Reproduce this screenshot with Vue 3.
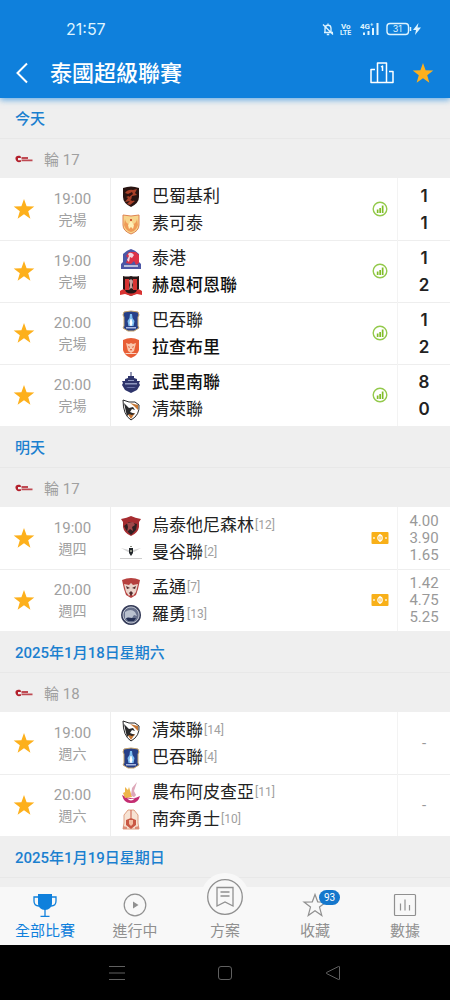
<template>
  <div class="app">
    <header class="header">
      <div class="status-bar">
        <span class="clock">21:57</span>
        <div class="status-icons">
          <svg width="12" height="14" viewBox="0 0 12 14" fill="none" stroke="currentColor" stroke-width="1.3">
            <path d="M2 10.500h9M3 10V6.500a3 3 0 0 1 6-.5v4M6 3V1.500M4.800 12.500h2.400M1 2.500l10 10" />
          </svg>
          <svg width="12" height="14" viewBox="0 0 12 14" fill="currentColor" class="tiny-text">
            <text x="1" y="6.500" font-size="8">Vo</text>
            <text x="0" y="13" font-size="7">LTE</text>
          </svg>
          <svg width="22" height="14" viewBox="0 0 22 14" fill="currentColor" class="tiny-text">
            <text x="2" y="6.500" font-size="8">4G⁺</text>
            <path d="M5 10.500h2V13H5zM9.500 9h2v4h-2zM14 6h2v7h-2zM18.500 1h2v12h-2z" />
          </svg>
          <svg width="36" height="14" viewBox="0 0 36 14" fill="none" stroke="currentColor" class="battery">
            <rect x="1" y="1.500" width="21.500" height="11" rx="3" stroke-width="1.400" />
            <path d="M24.500 5v4" stroke-width="1.500" />
            <text x="6.800" y="10.400" font-size="9" fill="currentColor" stroke="none">31</text>
            <path d="M32.500 1l-5.500 7h3l-1 5 6-7.500h-3.500z" fill="currentColor" stroke="none" />
          </svg>
        </div>
      </div>
      <div class="title-bar">
        <button class="icon-button back" type="button" aria-label="返回">
          <svg width="14" height="22" viewBox="0 0 14 22" fill="none" stroke="currentColor" stroke-width="2">
            <path d="M12 1.500L2.500 11l9.500 9.500" />
          </svg>
        </button>
        <h1 class="title">泰國超級聯賽</h1>
        <button class="icon-button" type="button" aria-label="排名">
          <svg width="24" height="22" viewBox="0 0 24 22" fill="none" stroke="currentColor" stroke-width="1.500">
            <path d="M7.500 20.500V1h9v19.500M5 7.500H1v13h22V9.500h-4M11 5l1.500-1V9" stroke-linejoin="round" />
          </svg>
        </button>
        <button class="icon-button" type="button" aria-label="收藏聯賽">
          <svg class="star" width="22" height="22" viewBox="0 0 22 22"><path :d="starPath" /></svg>
        </button>
      </div>
    </header>

    <main class="schedule">
      <section v-for="day in days" :key="day.date" class="day">
        <h2 class="date">{{ day.date }}</h2>
        <div class="round">
          <svg class="league-logo" width="18" height="8" viewBox="0 0 18 8">
            <path d="M5.500 1C2 0 0 1.500.500 4s2.500 3.800 5.500 2.800V5.200H3V3h3z" fill="#b3202c" />
            <path d="M6.500 2h6.500v2H6.500zM6.500 4.600h11v1.700h-11z" fill="#b3202c" opacity=".8" />
          </svg>
          <span>{{ day.round }}</span>
        </div>
        <ul class="matches">
          <li v-for="(match, matchIndex) in day.matches" :key="matchIndex" class="match">
            <div class="match-info">
              <button class="icon-button favourite" type="button" aria-label="收藏比賽">
                <svg class="star" width="22" height="22" viewBox="0 0 22 22"><path :d="starPath" /></svg>
              </button>
              <div class="time">
                <span>{{ match.time }}</span>
                <span class="state">{{ match.state }}</span>
              </div>
            </div>
            <div class="teams">
              <div v-for="team in match.teams" :key="team.name" class="team" :class="{ 'team--winner': team.winner }">
                <svg class="crest" width="22" height="22" viewBox="0 0 22 22">
                  <path
                    v-for="(shape, shapeIndex) in crests[team.crest]"
                    :key="shapeIndex"
                    :d="shape[0]"
                    :fill="shape[1]"
                    :stroke="shape[2] || 'none'"
                  />
                </svg>
                <span>{{ team.name }}</span>
                <span v-if="team.rank" class="rank">[{{ team.rank }}]</span>
              </div>
            </div>
            <div class="badge">
              <svg v-if="match.scores" width="16" height="16" viewBox="0 0 16 16">
                <circle cx="8" cy="8" r="6.800" fill="none" stroke="#93c94b" stroke-width="1.400" />
                <path d="M4.800 8.500h1.700V12H4.800zM7.300 7h1.700v5H7.300zM9.800 4.500h1.700V12H9.800z" fill="#80bd28" />
              </svg>
              <svg v-else-if="match.odds" width="18" height="14" viewBox="0 0 18 14">
                <rect x=".5" y="1" width="17" height="12" rx="1" fill="#f8b019" />
                <path d="M9 3v8M3 6v2M15 6v2" stroke="#fff" stroke-width="1.200" />
                <ellipse cx="9" cy="7" rx="2.200" ry="2.800" fill="none" stroke="#fff" stroke-width="1.200" />
              </svg>
            </div>
            <div class="result">
              <template v-if="match.scores">
                <span v-for="(score, i) in match.scores" :key="i" class="score">{{ score }}</span>
              </template>
              <template v-else-if="match.odds">
                <span v-for="odd in match.odds" :key="odd" class="odd">{{ odd }}</span>
              </template>
              <span v-else class="odd">-</span>
            </div>
          </li>
        </ul>
      </section>
    </main>

    <nav class="tabs">
      <a class="tab tab--active" href="#all">
        <svg width="26" height="26" viewBox="0 0 26 26">
          <path d="M6 2h14v9c0 4-3 7-7 7s-7-3-7-7z" fill="currentColor" />
          <path d="M6 5H2v4c0 3 2 5 5 5M20 5h4v4c0 3-2 5-5 5M13 17v7M8.500 24.300h9" fill="none" stroke="currentColor" stroke-width="1.300" />
        </svg>
        <span>全部比賽</span>
      </a>
      <a class="tab" href="#live">
        <svg width="26" height="26" viewBox="0 0 26 26">
          <circle cx="13" cy="13" r="10.800" fill="none" stroke="currentColor" stroke-width="1.200" />
          <path d="M11 9.500l5.500 3.500-5.500 3.500z" fill="currentColor" />
        </svg>
        <span>進行中</span>
      </a>
      <a class="tab tab--raised" href="#plans">
        <svg width="48" height="48" viewBox="0 0 48 48">
          <circle cx="24" cy="24" r="24" fill="#f8f8f8" />
          <g fill="none" stroke="currentColor" stroke-width="1.300">
            <circle cx="24" cy="24" r="17.300" />
            <path d="M16 14.500h16v18.500l-8-4-8 4zM19.500 19h9M19.500 23h9" />
          </g>
        </svg>
        <span>方案</span>
      </a>
      <a class="tab" href="#favourites">
        <svg width="26" height="26" viewBox="0 0 26 26" fill="none" stroke="currentColor" stroke-width="1.200">
          <path d="M13 2.500l2.700 7.300 8.300.300-6.500 5 2.300 8.400-6.800-4.700-6.800 4.700 2.300-8.400L2 10.100l8.300-.300z" />
        </svg>
        <span>收藏</span>
        <span class="count">93</span>
      </a>
      <a class="tab" href="#stats">
        <svg width="26" height="26" viewBox="0 0 26 26" fill="none" stroke="currentColor" stroke-width="1.200">
          <rect x="2.500" y="2.500" width="21" height="21" rx="1" />
          <path d="M8.500 11.500v7M13 7.500v11M17.500 13v5.500" />
        </svg>
        <span>數據</span>
      </a>
    </nav>

    <div class="system-nav">
      <button class="icon-button" type="button" aria-label="選單">
        <svg width="16" height="16" viewBox="0 0 16 16"><path d="M0 1.500h16M0 8h16M0 14.500h16" /></svg>
      </button>
      <button class="icon-button" type="button" aria-label="主畫面">
        <svg width="16" height="16" viewBox="0 0 16 16"><rect x="1.500" y="1.500" width="13" height="13" rx="2.500" /></svg>
      </button>
      <button class="icon-button" type="button" aria-label="上一頁">
        <svg width="16" height="16" viewBox="0 0 16 16"><path d="M14.500 2v12q0 1-1 .500L1.500 8.500q-.8-.5 0-1l12-6q1-.5 1 .5z" /></svg>
      </button>
    </div>
  </div>
</template>

<script setup>
const starPath = 'M11 1l2.600 7.300 7.700.200-6.100 4.700 2.200 7.500L11 16.300l-6.400 4.400 2.200-7.500L.7 8.500l7.700-.200z'

const shield = 'M3 2q8-3 16 0v9q0 6-8 10-8-4-8-10z'

// each crest is a list of [path, fill, stroke]
const crests = {
  police: [
    [shield, '#291411'],
    ['M5 7q3-4 8-3l4-1-2 4 2 2-5 1-1 4 4 1-5 4-3-1 3-3-5 1 3-4-2-1 5-2z', '#a94028'],
    ['M8 8l4-2 1 2-4 3zM10 14l4-2-1 3z', '#30100e'],
  ],
  sukhothai: [
    ['M3 2q8 2 16 0v10q0 6-8 9-8-3-8-9z', '#f7d58c', '#df8350'],
    ['M5 6q1 6 6 5 5 1 6-5l1 6q-2 6-7 7-5-1-7-7z', '#ef9b57'],
    ['M8 12l3-4 3 4-1 4-2-2-2 2z', '#fff0b8'],
    ['M10 6h2v2h-2z', '#d45a36'],
  ],
  port: [
    ['M11 1q4 1 8 5v8l2 2v5H1v-5l2-2V6q4-4 8-5z', '#4c57a6'],
    ['M12 4h4l3 3v8l-3 2-2-4-3 3-5-1 2-5-2-2 3-4z', '#dc3348'],
    ['M8 6q3-3 6 1l-2 3-2-1-1 5-2-2 2-4z', '#f3d6df'],
    ['M4 17h14v2H4z', '#b8bedb'],
  ],
  khonkaen: [
    ['M3 1q4 1 8 0 4 1 8 0v13q-2 5-8 7-6-2-8-7z', '#241617'],
    ['M5 4h4v11H5zM13 4h4v11h-4zM0 16q5-4 6 1 5 3 10 0 1-5 6-1v4l-5-1-6 2-6-2-5 1z', '#d73332'],
    ['M9 5q4-2 4 2l-1 3 1 4-2-1-2 2 1-5z', '#caa1a0'],
  ],
  bg: [
    ['M4 2l7-1 7 1 1 3-1 2v9l1 2-5 3h-6l-5-3 1-2V7L3 5z', '#263f87', '#c2a16b'],
    ['M10 4h2l.5 4 2 3-1 5h-5l-1-5 2-3z', '#7fbef1'],
    ['M10.500 9h1l1 4-1 3h-1l-1-3z', '#fff'],
    ['M6 17h10v1.500H6z', '#aab8e0'],
  ],
  ratchaburi: [
    ['M3 3q8-4 16 0v10q-1 5-8 8-7-3-8-8z', '#e85e35'],
    ['M6 6l3 1 2-1 2 1 3-1-1 4-1 4-3 2-3-2-1-4z', '#fac7ac'],
    ['M8 9l2 1-1 1zM14 9l-2 1 1 1zM10 12h2l-1 2z', '#d64b28'],
    ['M5 16h12l-1 1H6z', '#fbd5c4'],
  ],
  buriram: [
    ['M10.500 0h1v6h-1zM8 4h6v2l3 1v2h3l-1 2 1 2-3 5-6 3-6-3-3-5 1-2-1-2h3V7l3-1z', '#2e346b'],
    ['M5 11h12v1.500H5zM8 8h6v1H8z', '#8e97bf'],
    ['M6 15h10l-2 1H8z', '#6971a5'],
  ],
  chiangrai: [
    ['M3 1q6 3 12 2l4 3q1 10-8 15-8-5-8-20z', '#fff', '#28282a'],
    ['M10 4l8 2v5l-4-4zM7 14h8l-4 6z', '#c67735'],
    ['M4 4l5 5 4-1 2 3-3-1-2 3 5 2-3 1-3-1-2 2-1-4z', '#29292b'],
  ],
  sisaket: [
    ['M1 4q6-1 10-3 4 2 10 3l-2 3v5q-1 6-8 9-7-3-8-9V7z', '#a62c30'],
    ['M4 11l5-4 8 2-1 6-5 5-5-5z', '#302022'],
    ['M7 8l6-1 2 3-3 2 1 4-3-2-3 3 1-5z', '#a0484a'],
  ],
  bangkok: [
    ['M1 6l8 2h4l8-2-7 4H8z', '#d4d4d4'],
    ['M9 6h4v5l-2 3-2-3z', '#23282c'],
    ['M10 4h2v1h-2zM10 8h2v2h-2z', '#8b8f82'],
    ['M0 16h22v1H0z', '#ccc'],
  ],
  muangthong: [
    ['M2 3q9-4 18 0l-2 9-2 6-5 3-5-3-2-6z', '#b6413f'],
    ['M4 7l5 1 2-2 2 2 5-1-2 8-3 4-2-2-2 2-3-4z', '#ead3ca'],
    ['M6 9l4 2-3 1zM16 9l-4 2 3 1zM9 16l2-2 2 2-2 3z', '#512b2d'],
  ],
  rayong: [
    ['M11 1a10 10 0 1 0 .1 0z', '#353c59'],
    ['M11 3a8 8 0 1 0 .1 0z', '#68718c', '#c4c9d4'],
    ['M5 8q6-4 10 0l2 4-3-1-2 3-4-1-3 2z', '#bac2cf'],
    ['M6 14h10l-2 3H8z', '#242f53'],
  ],
  nongbua: [
    ['M2 13q9 6 18 1-2 8-10 7-6 0-8-8z', '#c42d72'],
    ['M5 5l3 3 1-3 3 10-7 1-2-5 2-1z', '#edb54c'],
    ['M17 0l-5 6-1 7q3 4 5 0l-2-4z', '#dda8b9'],
    ['M7 16q4 2 8 0-4 5-8 0z', '#fff'],
  ],
  lamphun: [
    ['M8 1h6l4 5v8l1 6H3l1-6V6z', '#f7e3d4', '#dfa083'],
    ['M10.500 1h1v9h-1zM6 11l5-2 5 2v5l-5 4-5-4z', '#c95844'],
    ['M9 11h4v4l-2 2-2-2z', '#f3bea3'],
    ['M3 17l4 1v2H3zM19 17l-4 1v2h4z', '#dc8d77'],
  ],
}

const days = [
  {
    date: '今天',
    round: '輪 17',
    matches: [
      {
        time: '19:00',
        state: '完場',
        teams: [{ name: '巴蜀基利', crest: 'police' }, { name: '素可泰', crest: 'sukhothai' }],
        scores: [1, 1],
      },
      {
        time: '19:00',
        state: '完場',
        teams: [{ name: '泰港', crest: 'port' }, { name: '赫恩柯恩聯', crest: 'khonkaen', winner: true }],
        scores: [1, 2],
      },
      {
        time: '20:00',
        state: '完場',
        teams: [{ name: '巴吞聯', crest: 'bg' }, { name: '拉查布里', crest: 'ratchaburi', winner: true }],
        scores: [1, 2],
      },
      {
        time: '20:00',
        state: '完場',
        teams: [{ name: '武里南聯', crest: 'buriram', winner: true }, { name: '清萊聯', crest: 'chiangrai' }],
        scores: [8, 0],
      },
    ],
  },
  {
    date: '明天',
    round: '輪 17',
    matches: [
      {
        time: '19:00',
        state: '週四',
        teams: [{ name: '烏泰他尼森林', crest: 'sisaket', rank: 12 }, { name: '曼谷聯', crest: 'bangkok', rank: 2 }],
        odds: ['4.00', '3.90', '1.65'],
      },
      {
        time: '20:00',
        state: '週四',
        teams: [{ name: '孟通', crest: 'muangthong', rank: 7 }, { name: '羅勇', crest: 'rayong', rank: 13 }],
        odds: ['1.42', '4.75', '5.25'],
      },
    ],
  },
  {
    date: '2025年1月18日星期六',
    round: '輪 18',
    matches: [
      {
        time: '19:00',
        state: '週六',
        teams: [{ name: '清萊聯', crest: 'chiangrai', rank: 14 }, { name: '巴吞聯', crest: 'bg', rank: 4 }],
      },
      {
        time: '20:00',
        state: '週六',
        teams: [{ name: '農布阿皮查亞', crest: 'nongbua', rank: 11 }, { name: '南奔勇士', crest: 'lamphun', rank: 10 }],
      },
    ],
  },
  {
    date: '2025年1月19日星期日',
    matches: [],
  },
]
</script>

<style>
body {
  background: #efefef;
}
</style>

<style scoped>
.app {
  display: flex;
  flex-direction: column;
  height: 100vh;
  overflow: hidden;
  background: #efefef;
  color: #222;
  font-family: Roboto, 'Noto Sans CJK TC', sans-serif;
}

.icon-button {
  display: flex;
  align-items: center;
  justify-content: center;
  padding: 0;
  border: 0;
  background: none;
  color: inherit;
}

.star {
  fill: #fdb01c;
}

.header {
  position: relative;
  z-index: 1;
  background: #0f80dc;
  color: #fff;
  box-shadow: 0 2px 6px rgba(15, 128, 220, 0.6);
}

.status-bar {
  display: flex;
  align-items: center;
  justify-content: space-between;
  height: 48px;
  padding: 10px 28px 0 66px;
  box-sizing: border-box;
  color: #dff4ff;
}

.clock {
  font-family: Inter, sans-serif;
  font-size: 16px;
}

.status-icons {
  display: flex;
  align-items: center;
  gap: 6px;
}

.tiny-text {
  font-family: Roboto, sans-serif;
  font-weight: 700;
}

.battery {
  font-family: Inter, sans-serif;
}

.title-bar {
  display: flex;
  align-items: center;
  gap: 18px;
  height: 50px;
  padding: 0 16px 0 15px;
}

.title {
  flex: 1;
  margin: 0 0 0 3px;
  padding-top: 2px;
  font-size: 22px;
  line-height: 32px;
  font-weight: 500;
}

.schedule {
  flex: 1;
  min-height: 0;
  overflow: hidden;
}

.day {
  border-bottom: 1px solid #efefef;
}

.date {
  height: 41px;
  margin: 0;
  padding: 0 15px;
  box-sizing: border-box;
  border-bottom: 1px solid #e8e8e8;
  font-size: 15px;
  line-height: 43px;
  font-weight: 500;
  color: #1b80cf;
}

.round {
  display: flex;
  align-items: center;
  gap: 11px;
  height: 39px;
  padding: 0 15px;
  font-size: 15px;
  color: #a0a0a0;
}

.matches {
  margin: 0;
  padding: 0;
  list-style: none;
}

.match {
  display: grid;
  grid-template-columns: 110px 1fr 35px 53px;
  height: 62px;
  background: #fff;
}

.match + .match {
  box-shadow: inset 0 1px #eee;
}

.match-info {
  display: flex;
  align-items: center;
}

.favourite {
  width: 48px;
  height: 48px;
}

.time {
  display: flex;
  flex-direction: column;
  width: 49px;
  padding-top: 2px;
  font-size: 15px;
  line-height: 21px;
  text-align: center;
  color: #a0a0a0;
}

.state {
  font-size: 14px;
}

.teams {
  display: flex;
  flex-direction: column;
  justify-content: center;
  padding: 2px 0 0 9px;
  border-left: 1px solid #eee;
}

.team {
  display: flex;
  align-items: center;
  height: 27px;
  font-size: 17px;
  line-height: 27px;
  white-space: nowrap;
}

.team--winner {
  font-weight: 500;
  color: #111;
}

.crest {
  margin-right: 10px;
}

.rank {
  margin-left: 1px;
  font-size: 12px;
  color: #a0a0a0;
}

.badge {
  display: flex;
  align-items: center;
  justify-content: center;
}

.result {
  display: flex;
  flex-direction: column;
  justify-content: center;
  padding-top: 1px;
  border-left: 1px solid #f3f3f3;
  text-align: center;
}

.score {
  font-family: Inter, sans-serif;
  font-size: 17px;
  line-height: 27px;
  font-weight: 600;
}

.odd {
  font-size: 15px;
  line-height: 17px;
  color: #999;
}

.tabs {
  position: relative;
  display: grid;
  grid-template-columns: repeat(5, 1fr);
  grid-template-rows: 58px;
  background: #f8f8f8;
}

.tab {
  position: relative;
  display: flex;
  flex-direction: column;
  align-items: center;
  justify-content: flex-end;
  padding-bottom: 3px;
  font-size: 15px;
  line-height: 22px;
  color: #909090;
  text-decoration: none;
}

.tab svg {
  flex-shrink: 0;
  margin-bottom: 2px;
}

.tab--active {
  color: #0f80dc;
}

.tab--raised svg {
  margin-bottom: -1px;
}

.count {
  position: absolute;
  top: 3px;
  left: 50%;
  width: 21px;
  margin-left: 4px;
  border-radius: 8px;
  background: #1577cc;
  font-size: 10px;
  line-height: 15px;
  text-align: center;
  color: #fff;
}

.system-nav {
  display: flex;
  align-items: center;
  justify-content: center;
  gap: 92px;
  height: 55px;
  background: #000;
}

.system-nav svg {
  fill: none;
  stroke: #606060;
}
</style>
